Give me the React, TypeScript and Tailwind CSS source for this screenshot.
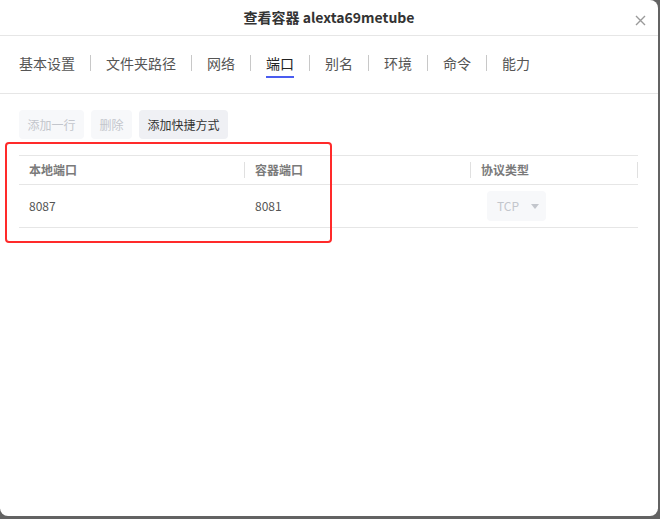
import React from 'react';

const tabs = ['基本设置', '文件夹路径', '网络', '端口', '别名', '环境', '命令', '能力'];

export default function App() {
  return (
    <div className="w-[660px] h-[519px] bg-[#636363] overflow-hidden" style={{ fontFamily: '"Noto Sans CJK SC", "Noto Sans", sans-serif' }}>
      <div className="relative w-[658px] h-[516px] bg-white rounded-b-lg rounded-tr-lg">
        {/* header */}
        <div className="h-[36px] border-b border-[#e6e6e6] flex items-center justify-center relative">
          <span className="text-[14px] font-bold text-[#333] leading-none -mt-[1px]">查看容器 alexta69metube</span>
          <button className="absolute right-[12px] top-[15px] text-[#9a9a9a]">
            <svg width="11" height="11" viewBox="0 0 11 11" fill="none" stroke="currentColor" strokeWidth="1.4">
              <path d="M1 1L10 10M10 1L1 10" />
            </svg>
          </button>
        </div>

        {/* tabs */}
        <div className="border-b border-[#e6e6e6] pt-[17px] pb-[15px] pl-[19px] flex items-start">
          {tabs.map((t, i) => (
            <div key={t} className="flex items-start">
              {i > 0 && <div className="w-px h-[16px] bg-[#c8c8c8] mt-[2px] mx-[15px]" />}
              <div className="flex flex-col items-stretch">
                <span className={`text-[14px] leading-[20px] ${t === '端口' ? 'text-[#222]' : 'text-[#555]'}`}>{t}</span>
                <div className={`h-[2px] mt-[3px] ${t === '端口' ? 'bg-[#4a5cf0]' : 'bg-transparent'}`} />
              </div>
            </div>
          ))}
        </div>

        {/* toolbar */}
        <div className="flex gap-[7px] pl-[19px] mt-[16px]">
          <button className="h-[29px] w-[65px] rounded-[4px] bg-[#f7f8fa] text-[#c3c6cc] text-[12px]">添加一行</button>
          <button className="h-[29px] w-[41px] rounded-[4px] bg-[#f7f8fa] text-[#c3c6cc] text-[12px]">删除</button>
          <button className="h-[29px] w-[89px] rounded-[4px] bg-[#eff0f4] text-[#333] text-[12px]">添加快捷方式</button>
        </div>

        {/* table */}
        <div className="ml-[19px] w-[619px] mt-[16px] border-t border-[#e6e6e6]">
          <div className="flex h-[29px] items-center border-b border-[#e6e6e6] text-[12px] font-bold text-[#7a7a7a]">
            <div className="w-[225px] pl-[10px]">本地端口</div>
            <div className="w-[226px] h-[16px] border-l border-[#e0e0e0] pl-[10px] flex items-center">容器端口</div>
            <div className="flex-1 h-[16px] border-l border-r border-[#e0e0e0] pl-[10px] flex items-center">协议类型</div>
          </div>
          <div className="flex h-[43px] items-center border-b border-[#e6e6e6] text-[12px] text-[#555]">
            <div className="w-[225px] pl-[10px]">8087</div>
            <div className="w-[226px] pl-[11px]">8081</div>
            <div className="flex-1 pl-[17px]">
              <div className="w-[59px] h-[30px] rounded-[4px] bg-[#f7f8fa] flex items-center pl-[10px] text-[#c3c6cc] text-[12px]">
                <span>TCP</span>
                <svg className="ml-[12px]" width="8" height="5" viewBox="0 0 8 5" fill="#c3c6cc">
                  <path d="M0 0H8L4 5Z" />
                </svg>
              </div>
            </div>
          </div>
        </div>

        {/* annotation */}
        <div className="absolute left-[5px] top-[142px] w-[327px] h-[101px] border-2 border-[#ff2a2a] rounded-[4px]" />
      </div>
    </div>
  );
}
